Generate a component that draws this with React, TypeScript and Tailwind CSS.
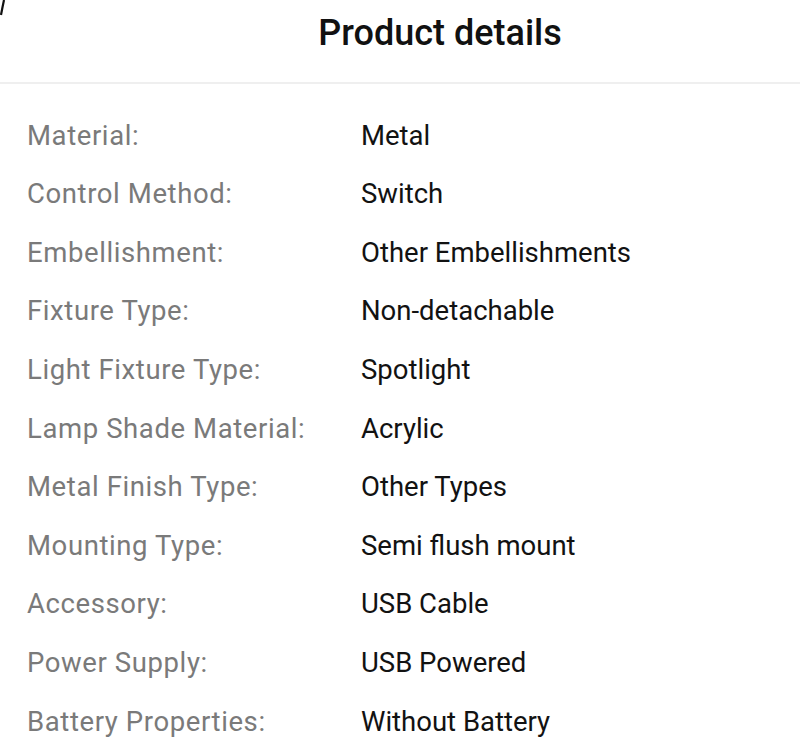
import React from "react";

const rows: [string, string][] = [
  ["Material:", "Metal"],
  ["Control Method:", "Switch"],
  ["Embellishment:", "Other Embellishments"],
  ["Fixture Type:", "Non-detachable"],
  ["Light Fixture Type:", "Spotlight"],
  ["Lamp Shade Material:", "Acrylic"],
  ["Metal Finish Type:", "Other Types"],
  ["Mounting Type:", "Semi flush mount"],
  ["Accessory:", "USB Cable"],
  ["Power Supply:", "USB Powered"],
  ["Battery Properties:", "Without Battery"],
];

export default function App() {
  return (
    <div
      className="relative w-[800px] h-[745px] overflow-hidden bg-white"
      style={{ fontFamily: "Roboto, 'Noto Sans', sans-serif" }}
    >
      <svg className="absolute left-0 top-0" width="6" height="16" viewBox="0 0 6 16">
        <path d="M4 0 Q2.5 7 1 15" stroke="#111" strokeWidth="2.2" fill="none" />
      </svg>
      <div className="h-[84px] flex items-start justify-center pt-[15px] pl-[80px] border-b-2 border-[#efefef]">
        <span className="text-[36px] leading-[36px] font-medium text-[#111]">Product details</span>
      </div>
      <div className="pt-[22px] px-[27px]">
        {rows.map(([k, v]) => (
          <div key={k} className="flex items-center h-[58.6px] text-[27.5px]">
            <span className="w-[334px] text-[#7a7a7a] tracking-[0.6px]">{k}</span>
            <span className="text-[#121212]">{v}</span>
          </div>
        ))}
      </div>
    </div>
  );
}
